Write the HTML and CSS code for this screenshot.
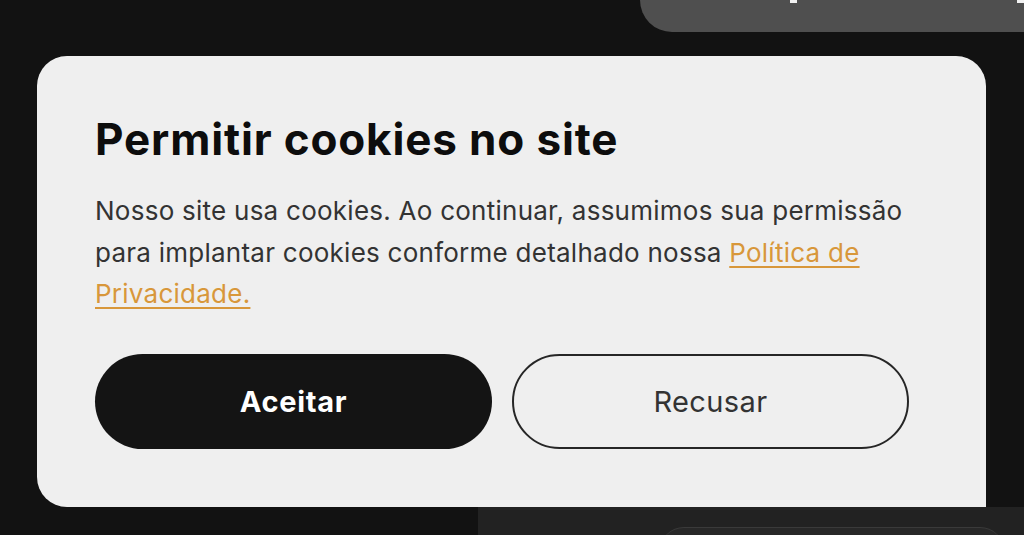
FILE: index.html
```html
<!DOCTYPE html>
<html lang="pt">
<head>
<meta charset="utf-8">
<title>Permitir cookies</title>
<link rel="stylesheet" href="styles.css">
</head>
<body>
<div class="top-strip">
  <div class="top-pill"><span class="mark mark-a"></span><span class="mark mark-b"></span></div>
</div>
<section class="card">
  <h1 class="title">Permitir cookies no site</h1>
  <p class="text">Nosso site usa cookies. Ao continuar, assumimos sua permissão para implantar cookies conforme detalhado nossa <a class="link" href="#">Política de Privacidade.</a></p>
  <div class="actions">
    <button class="btn btn-accept">Aceitar</button>
    <button class="btn btn-decline">Recusar</button>
  </div>
</section>
<div class="bottom">
  <div class="bottom-left"></div>
  <div class="bottom-right"><div class="bottom-pill"></div></div>
</div>
</body>
</html>
```
FILE: styles.css
```css
* { box-sizing: border-box; }
html, body {
  margin: 0;
  padding: 0;
}
body {
  width: 1024px;
  height: 535px;
  overflow: hidden;
  background: #121212;
  font-family: "Inter", "Noto Sans", sans-serif;
  display: flex;
  flex-direction: column;
}
.top-strip {
  height: 32px;
  display: flex;
  justify-content: flex-end;
  flex-shrink: 0;
}
.top-pill {
  width: 384px;
  height: 32px;
  background: #4f4f4f;
  border-bottom-left-radius: 40px;
  display: flex;
  align-items: flex-start;
  padding-left: 150px;
  gap: 220px;
}
.mark {
  display: block;
  width: 8px;
  height: 3px;
  background: #f2f2f2;
}
.card {
  margin: 24px 0 0 37px;
  width: 949px;
  height: 451px;
  flex-shrink: 0;
  background: #efefef;
  border-radius: 30px 30px 0 30px;
  padding: 58px 40px 0 58px;
}
.title {
  margin: 0;
  font-size: 44px;
  line-height: 50px;
  font-weight: 700;
  letter-spacing: 0.85px;
  color: #0d0d0d;
}
.text {
  margin: 26px 0 0;
  font-size: 26px;
  line-height: 41.5px;
  letter-spacing: 0.25px;
  color: #333333;
  width: 830px;
}
.link {
  color: #d8973a;
  text-decoration: underline;
  text-underline-offset: 4px;
  text-decoration-thickness: 2px;
}
.actions {
  margin-top: 39px;
  display: flex;
  gap: 20px;
}
.btn {
  width: 397px;
  height: 95px;
  border-radius: 48px;
  font-family: inherit;
  font-size: 29px;
  cursor: pointer;
}
.btn-accept {
  background: #141414;
  color: #ffffff;
  font-weight: 700;
  letter-spacing: 0.7px;
  border: none;
}
.btn-decline {
  background: transparent;
  color: #333333;
  font-weight: 400;
  letter-spacing: 0.4px;
  border: 2px solid #262626;
}
.bottom {
  flex: 1;
  min-height: 0;
  overflow: hidden;
  display: flex;
}
.bottom-left {
  width: 478px;
  background: #121212;
}
.bottom-right {
  flex: 1;
  background: #222222;
  padding: 20px 20px 0 182px;
}
.bottom-pill {
  height: 40px;
  background: #282828;
  border-top: 1px solid #3a3a3a;
  border-radius: 24px 24px 0 0;
}
```
